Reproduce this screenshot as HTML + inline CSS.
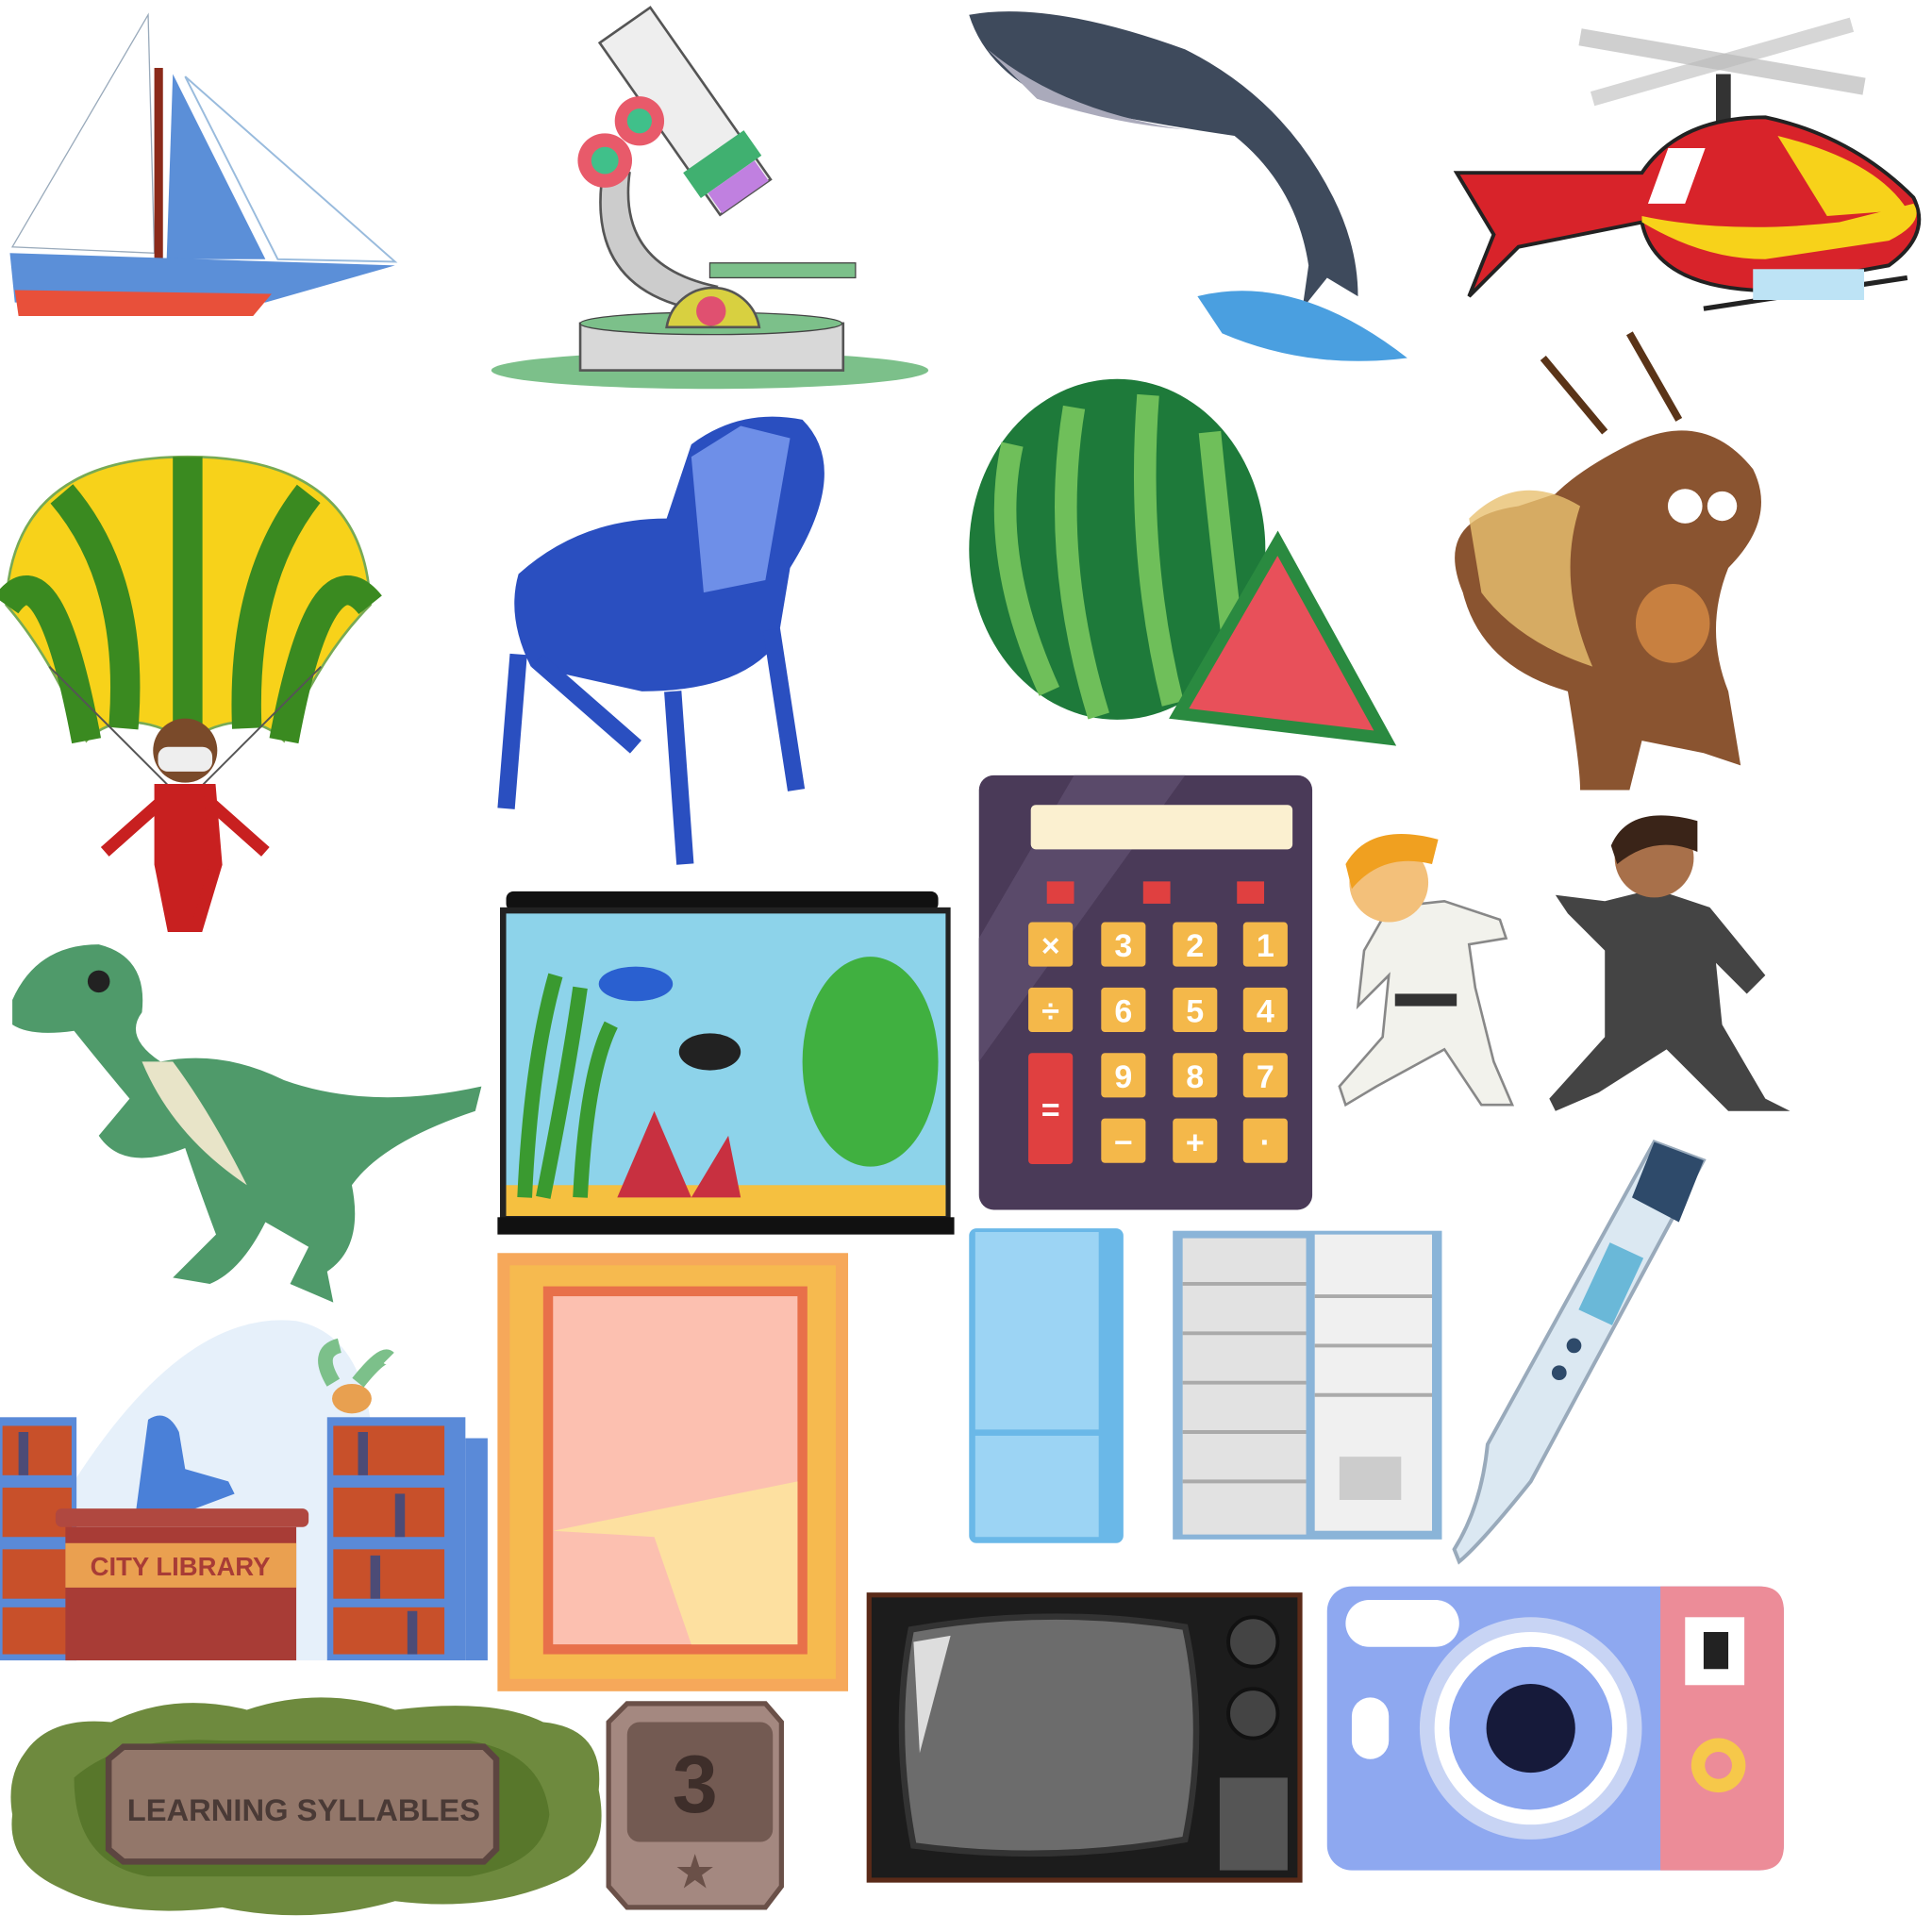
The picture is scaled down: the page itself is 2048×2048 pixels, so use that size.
<!DOCTYPE html>
<html><head><meta charset="utf-8"><style>
html,body{margin:0;padding:0;background:#fff;width:2048px;height:2048px;overflow:hidden}
svg{display:block}
text{font-family:"Liberation Sans",sans-serif;font-weight:bold}
</style></head><body>
<svg width="2048" height="2048" viewBox="0 0 1565 1565" xmlns="http://www.w3.org/2000/svg">
<rect width="1565" height="1565" fill="#fff"/>
<!-- sailboat -->
<polygon points="120,12 125,205 10,200" fill="none" stroke="#9ab" stroke-width="1"/>
<polygon points="140,60 215,210 135,210" fill="#5b8fd8"/>
<polygon points="150,62 320,212 225,210" fill="#fff" stroke="#9bd" stroke-width="1.5"/>
<rect x="125" y="55" width="7" height="175" fill="#8b2a1a"/>
<polygon points="8,205 320,215 215,245 12,245" fill="#5b8fd8"/>
<polygon points="12,235 220,238 205,256 15,256" fill="#e8503a"/>
<!-- microscope -->
<ellipse cx="575" cy="300" rx="177" ry="15" fill="#7cc08a"/>
<rect x="470" y="262" width="213" height="38" fill="#d8d8d8" stroke="#555" stroke-width="2"/>
<ellipse cx="576" cy="262" rx="106" ry="9" fill="#7cc08a" stroke="#444"/>
<path d="M490 130 Q470 230 560 250 L580 232 Q500 215 510 140Z" fill="#ccc" stroke="#555" stroke-width="2"/>
<path d="M540 265 A38 38 0 0 1 615 265Z" fill="#d8d040" stroke="#555" stroke-width="2"/>
<circle cx="576" cy="252" r="12" fill="#e05070"/>
<rect x="575" y="213" width="118" height="12" fill="#7cc08a" stroke="#444"/>
<g transform="rotate(-35 555 90)"><rect x="530" y="5" width="50" height="170" fill="#eee" stroke="#555" stroke-width="2"/><rect x="525" y="130" width="60" height="25" fill="#40b070"/><rect x="532" y="155" width="46" height="20" fill="#c080e0"/></g>
<circle cx="490" cy="130" r="22" fill="#e85a6a"/><circle cx="490" cy="130" r="11" fill="#40c08a"/>
<circle cx="518" cy="98" r="20" fill="#e85a6a"/><circle cx="518" cy="98" r="10" fill="#40c08a"/>
<!-- whale -->
<path d="M785 12 Q850 0 960 40 Q1040 80 1080 160 Q1100 200 1100 240 L1075 225 L1055 250 L1060 215 Q1050 150 1000 110 Q930 100 860 85 Q800 60 785 12Z" fill="#3e4a5c"/>
<path d="M800 40 Q860 90 960 105 Q900 100 840 80Z" fill="#aab"/>
<path d="M970 240 Q1050 220 1140 290 Q1060 300 990 270Z" fill="#4a9fe0"/>
<!-- helicopter -->
<path d="M1280 30 L1510 70" stroke="#bbb" stroke-width="14" opacity=".7"/>
<path d="M1290 80 L1500 20" stroke="#bbb" stroke-width="12" opacity=".6"/>
<rect x="1390" y="60" width="12" height="40" fill="#333"/>
<path d="M1180 140 L1210 190 L1190 240 L1230 200 L1330 180 Q1340 230 1420 235 L1530 215 Q1565 190 1550 160 Q1500 110 1430 95 Q1360 95 1330 140 Z" fill="#d8232a" stroke="#222" stroke-width="3"/>
<path d="M1330 180 Q1380 210 1430 210 L1530 195 Q1560 180 1550 165 L1490 180 Q1400 190 1330 175Z" fill="#f7d21a"/>
<path d="M1440 110 Q1520 130 1545 170 L1480 175 Z" fill="#f7d21a"/>
<rect x="1395" y="120" width="30" height="45" fill="#fff" transform="skewX(-20)"/>
<path d="M1380 250 L1545 225" stroke="#222" stroke-width="4"/>
<rect x="1420" y="218" width="90" height="25" fill="#bde3f5"/>
<!-- parachute -->
<path d="M5 490 Q10 370 152 370 Q295 370 300 490 Q260 530 230 600 Q200 570 152 600 Q100 570 70 600 Q40 530 5 490Z" fill="#f7d21a" stroke="#7a5" stroke-width="2"/>
<path d="M5 490 Q40 440 70 600 M50 400 Q110 470 100 590 M152 370 L152 600 M250 400 Q195 470 200 590 M300 490 Q260 440 230 600" stroke="#3a8a20" stroke-width="24" fill="none"/>
<path d="M40 540 L140 640 M260 540 L160 640" stroke="#555" stroke-width="1.5"/>
<circle cx="150" cy="608" r="26" fill="#7a4a2a"/><rect x="128" y="605" width="44" height="20" rx="8" fill="#eee"/>
<path d="M130 640 L170 640 L175 700 L160 750 L140 750 L130 700Z M130 650 L85 690 M170 650 L215 690" fill="#c82020" stroke="#c82020" stroke-width="10"/>
<!-- chair -->
<path d="M420 465 Q470 420 540 420 L560 360 Q600 330 650 340 Q690 380 640 460 L630 520 Q600 560 520 560 L430 540 Q410 500 420 465Z" fill="#2a4fc0"/>
<path d="M560 370 L600 345 L640 355 L620 470 L570 480Z" fill="#6e8fe8"/>
<path d="M420 530 L410 655 M435 535 L515 605 M545 560 L555 700 M625 510 L645 640" stroke="#2a4fc0" stroke-width="14"/>
<!-- watermelon -->
<ellipse cx="905" cy="445" rx="120" ry="138" fill="#1e7a3a"/>
<path d="M820 360 Q800 450 850 560 M870 330 Q850 450 890 580 M930 320 Q920 450 950 570 M980 350 Q990 450 1000 530" stroke="#6fbf5a" stroke-width="18" fill="none"/>
<polygon points="955,578 1035,440 1122,598" fill="#e8505a" stroke="#2a8a40" stroke-width="10"/>
<!-- squirrel -->
<path d="M1230 410 Q1160 420 1185 480 Q1200 540 1270 560 Q1280 620 1280 640 L1320 640 L1330 600 L1380 610 L1410 620 L1400 560 Q1380 510 1400 460 Q1440 420 1420 380 Q1380 330 1320 360 Q1280 380 1260 400Z" fill="#8a5430"/>
<path d="M1190 420 Q1230 380 1280 410 Q1260 470 1290 540 Q1230 520 1200 480Z" fill="#e8c070" opacity=".8"/>
<circle cx="1365" cy="410" r="14" fill="#fff"/><circle cx="1395" cy="410" r="12" fill="#fff"/>
<ellipse cx="1355" cy="505" rx="30" ry="32" fill="#c88040"/>
<path d="M1250 290 L1300 350 M1320 270 L1360 340" stroke="#5a3418" stroke-width="6"/>
<!-- calculator -->
<rect x="793" y="628" width="270" height="352" rx="12" fill="#4a3a58"/>
<polygon points="870,628 960,628 793,860 793,760" fill="#5a4a6a"/>
<rect x="835" y="652" width="212" height="36" rx="4" fill="#fbf0d0"/>
<g fill="#e04040"><rect x="848" y="714" width="22" height="18"/><rect x="926" y="714" width="22" height="18"/><rect x="1002" y="714" width="22" height="18"/></g>
<g fill="#f4b84a">
<rect x="833" y="747" width="36" height="36" rx="3"/><rect x="892" y="747" width="36" height="36" rx="3"/><rect x="950" y="747" width="36" height="36" rx="3"/><rect x="1007" y="747" width="36" height="36" rx="3"/>
<rect x="833" y="800" width="36" height="36" rx="3"/><rect x="892" y="800" width="36" height="36" rx="3"/><rect x="950" y="800" width="36" height="36" rx="3"/><rect x="1007" y="800" width="36" height="36" rx="3"/>
<rect x="892" y="853" width="36" height="36" rx="3"/><rect x="950" y="853" width="36" height="36" rx="3"/><rect x="1007" y="853" width="36" height="36" rx="3"/>
<rect x="892" y="906" width="36" height="36" rx="3"/><rect x="950" y="906" width="36" height="36" rx="3"/><rect x="1007" y="906" width="36" height="36" rx="3"/>
</g>
<rect x="833" y="853" width="36" height="90" rx="3" fill="#e04040"/>
<g fill="#fff" font-size="26" text-anchor="middle">
<text x="851" y="775">×</text><text x="910" y="775">3</text><text x="968" y="775">2</text><text x="1025" y="775">1</text>
<text x="851" y="828">÷</text><text x="910" y="828">6</text><text x="968" y="828">5</text><text x="1025" y="828">4</text>
<text x="910" y="881">9</text><text x="968" y="881">8</text><text x="1025" y="881">7</text>
<text x="910" y="934">−</text><text x="968" y="934">+</text><text x="1025" y="934">·</text><text x="851" y="908">=</text></g>
<!-- karate kids -->
<path d="M1125 735 L1170 730 L1215 745 L1220 760 L1190 765 L1195 800 L1210 860 L1225 895 L1200 895 L1170 850 L1115 880 L1090 895 L1085 880 L1120 840 L1125 790 L1100 815 L1105 770Z" fill="#f2f2ec" stroke="#888" stroke-width="2"/>
<circle cx="1125" cy="715" r="32" fill="#f3c07a"/><path d="M1090 700 Q1110 665 1165 680 L1160 700 Q1120 690 1095 720Z" fill="#f0a020"/>
<rect x="1130" y="805" width="50" height="10" fill="#333"/>
<path d="M1300 730 L1340 720 L1385 735 L1430 790 L1415 805 L1390 780 L1395 830 L1430 890 L1450 900 L1400 900 L1350 850 L1295 885 L1260 900 L1255 890 L1300 840 L1300 770 L1270 740 L1260 725Z" fill="#444"/>
<circle cx="1340" cy="695" r="32" fill="#a8704a"/><path d="M1305 685 Q1320 650 1375 665 L1375 690 Q1340 675 1310 700Z" fill="#3a2418"/>
<!-- dinosaur -->
<path d="M10 810 Q30 765 80 765 Q120 775 115 820 Q100 840 130 860 Q180 850 230 875 Q300 900 390 880 L385 900 Q310 925 285 960 Q295 1010 265 1030 L270 1055 L235 1040 L250 1010 L215 990 Q195 1030 170 1040 L140 1035 L175 1000 Q160 960 150 930 Q100 950 80 920 L105 890 Q80 860 60 835 Q25 840 10 830Z" fill="#4f9a6a"/>
<path d="M115 860 Q140 920 200 960 Q170 900 140 860Z" fill="#e8e4c8"/>
<circle cx="80" cy="795" r="9" fill="#222"/>
<!-- aquarium -->
<rect x="410" y="722" width="350" height="16" rx="6" fill="#111"/>
<rect x="405" y="735" width="365" height="255" fill="#222"/>
<rect x="410" y="740" width="356" height="245" fill="#8dd3ea"/>
<rect x="410" y="960" width="356" height="25" fill="#f5c040"/>
<rect x="403" y="986" width="370" height="14" fill="#111"/>
<path d="M425 970 Q430 860 450 790 M440 970 Q460 870 470 800 M470 970 Q475 870 495 830" stroke="#3a9a30" stroke-width="12" fill="none"/>
<ellipse cx="705" cy="860" rx="55" ry="85" fill="#40b040"/>
<path d="M500 970 L530 900 L560 970 L590 920 L600 970Z" fill="#c83040"/>
<ellipse cx="515" cy="797" rx="30" ry="14" fill="#2a60d0"/><ellipse cx="575" cy="852" rx="25" ry="15" fill="#222"/>
<!-- frame -->
<rect x="403" y="1015" width="284" height="355" fill="#f6a85a"/>
<rect x="413" y="1025" width="264" height="335" fill="#f7c24a" opacity=".7"/>
<rect x="440" y="1042" width="214" height="298" fill="#e8704a"/>
<rect x="448" y="1050" width="198" height="282" fill="#fcc0b0"/>
<polygon points="448,1240 530,1245 560,1332 646,1332 646,1200" fill="#fde0a0"/>
<!-- fridges -->
<rect x="785" y="995" width="125" height="255" rx="6" fill="#6ab8e8"/>
<rect x="790" y="998" width="100" height="160" fill="#9cd4f4"/>
<rect x="790" y="1163" width="100" height="82" fill="#9cd4f4"/>
<rect x="950" y="997" width="218" height="250" fill="#8ab4d8"/>
<rect x="958" y="1003" width="100" height="240" fill="#e2e2e2"/>
<rect x="1065" y="1000" width="95" height="240" fill="#f0f0f0"/>
<g stroke="#aaa" stroke-width="3"><path d="M958 1040 H1058 M958 1080 H1058 M958 1120 H1058 M958 1160 H1058 M958 1200 H1058 M1065 1050 H1160 M1065 1090 H1160 M1065 1130 H1160"/></g>
<rect x="1085" y="1180" width="50" height="35" fill="#ccc"/>
<!-- thermometer -->
<path d="M1340 925 L1380 940 L1240 1200 Q1200 1250 1182 1265 L1178 1255 Q1200 1220 1205 1170 Z" fill="#dbe8f2" stroke="#9ab" stroke-width="3"/>
<path d="M1340 925 L1380 940 L1360 990 L1322 970Z" fill="#2e4a6a"/>
<rect x="1290" y="1010" width="30" height="60" fill="#6ab8d8" transform="rotate(25 1305 1040)"/>
<circle cx="1275" cy="1090" r="6" fill="#2e4a6a"/><circle cx="1263" cy="1112" r="6" fill="#2e4a6a"/>
<!-- library -->
<path d="M60 1200 Q150 1060 240 1070 Q290 1080 300 1150 L280 1345 L60 1345Z" fill="#e6f0fa"/>
<rect x="0" y="1148" width="62" height="197" fill="#5a8ad8"/>
<rect x="265" y="1148" width="112" height="197" fill="#5a8ad8"/>
<rect x="377" y="1165" width="18" height="180" fill="#5a8ad8"/>
<g fill="#c8502a"><rect x="2" y="1155" width="56" height="40"/><rect x="2" y="1205" width="56" height="40"/><rect x="2" y="1255" width="56" height="40"/><rect x="2" y="1302" width="56" height="38"/>
<rect x="270" y="1155" width="90" height="40"/><rect x="270" y="1205" width="90" height="40"/><rect x="270" y="1255" width="90" height="40"/><rect x="270" y="1302" width="90" height="38"/></g>
<g fill="#2e4a8a" opacity=".8"><rect x="15" y="1160" width="8" height="35"/><rect x="290" y="1160" width="8" height="35"/><rect x="320" y="1210" width="8" height="35"/><rect x="300" y="1260" width="8" height="35"/><rect x="330" y="1305" width="8" height="35"/></g>
<path d="M120 1150 Q135 1140 145 1160 L150 1190 L185 1200 L190 1210 L150 1225 L110 1225 Z" fill="#4a80d8"/>
<ellipse cx="285" cy="1133" rx="16" ry="12" fill="#e8a050"/>
<path d="M270 1120 Q255 1095 275 1090 M290 1120 Q310 1095 315 1100" stroke="#7cc08a" stroke-width="12" fill="none"/>
<rect x="45" y="1222" width="205" height="15" rx="5" fill="#b04840"/>
<rect x="53" y="1237" width="187" height="108" fill="#a83c36"/>
<rect x="53" y="1250" width="187" height="36" fill="#eaa050"/>
<text x="146" y="1276" font-size="21" fill="#a83c36" text-anchor="middle">CITY LIBRARY</text>
<!-- learning syllables -->
<path d="M20 1420 Q40 1390 90 1395 Q140 1370 200 1385 Q260 1365 320 1385 Q400 1375 440 1395 Q490 1400 485 1450 Q495 1500 460 1520 Q400 1550 320 1540 Q250 1560 180 1545 Q100 1555 50 1530 Q5 1510 10 1470 Q5 1440 20 1420Z" fill="#6e8a3e"/>
<path d="M60 1440 Q100 1405 180 1410 L380 1410 Q440 1420 445 1470 Q440 1510 380 1520 L120 1520 Q60 1510 60 1440Z" fill="#4a6a20" opacity=".6"/>
<polygon points="100,1415 392,1415 402,1425 402,1498 392,1508 100,1508 88,1498 88,1425" fill="#93776a" stroke="#5c4540" stroke-width="5"/>
<text x="246" y="1475" font-size="25" fill="#4a3a36" text-anchor="middle">LEARNING SYLLABLES</text>
<!-- number 3 -->
<polygon points="508,1380 620,1380 633,1395 633,1528 620,1545 508,1545 493,1528 493,1395" fill="#a48880" stroke="#6a5048" stroke-width="4"/>
<rect x="508" y="1395" width="118" height="97" rx="10" fill="#735a52"/>
<text x="563" y="1468" font-size="66" fill="#3e2e2a" text-anchor="middle">3</text>
<text x="563" y="1528" font-size="34" fill="#6a5048" text-anchor="middle">★</text>
<!-- TV -->
<rect x="702" y="1290" width="353" height="235" fill="#5a2a18"/>
<rect x="706" y="1294" width="345" height="227" fill="#1c1c1c"/>
<path d="M738 1320 Q850 1300 960 1318 Q978 1400 960 1490 Q850 1510 740 1495 Q722 1400 738 1320Z" fill="#6c6c6c" stroke="#333" stroke-width="5"/>
<path d="M740 1330 L770 1325 L745 1420Z" fill="#ddd"/>
<circle cx="1015" cy="1330" r="20" fill="#444" stroke="#111" stroke-width="3"/><circle cx="1015" cy="1388" r="20" fill="#444" stroke="#111" stroke-width="3"/>
<g fill="#555"><rect x="988" y="1440" width="55" height="75"/></g>
<!-- camera -->
<rect x="1075" y="1285" width="370" height="230" rx="20" fill="#8ea8f0"/>
<path d="M1345 1285 L1425 1285 Q1445 1285 1445 1305 L1445 1495 Q1445 1515 1425 1515 L1345 1515Z" fill="#ec8c98"/>
<rect x="1365" y="1310" width="48" height="55" fill="#fff"/><rect x="1380" y="1322" width="20" height="30" fill="#222"/>
<circle cx="1392" cy="1430" r="22" fill="#f6c84a"/><circle cx="1392" cy="1430" r="11" fill="#ec8c98"/>
<rect x="1090" y="1296" width="92" height="38" rx="19" fill="#fff"/>
<rect x="1095" y="1375" width="30" height="50" rx="15" fill="#fff"/>
<circle cx="1240" cy="1400" r="90" fill="#c8d4f4"/><circle cx="1240" cy="1400" r="78" fill="#fff"/>
<circle cx="1240" cy="1400" r="66" fill="#8ea8f0"/><circle cx="1240" cy="1400" r="36" fill="#161a3a"/>
</svg>
</body></html>
